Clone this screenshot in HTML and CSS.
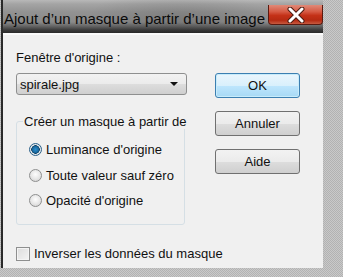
FILE: index.html
```html
<!DOCTYPE html>
<html lang="fr">
<head>
<meta charset="utf-8">
<title>Ajout d'un masque</title>
<link rel="stylesheet" href="styles.css">
</head>
<body>
<div class="window">
  <div class="titlebar">
    <span class="title">Ajout d’un masque à partir d’une image</span>
    <div class="close">
      <svg width="22" height="16" viewBox="0 0 22 16">
        <path d="M5 2 L17 14 M17 2 L5 14" stroke="#4a1a10" stroke-width="5" stroke-linecap="round"/>
        <path d="M5 2 L17 14 M17 2 L5 14" stroke="#ffffff" stroke-width="3" stroke-linecap="round"/>
      </svg>
    </div>
  </div>
  <div class="content">
    <div class="main">
      <div class="left">
        <div class="label">Fenêtre d'origine :</div>
        <div class="select">
          <span>spirale.jpg</span>
          <span class="arrow"></span>
        </div>
        <fieldset class="group">
          <legend>Créer un masque à partir de</legend>
          <div class="radios">
            <div class="radio-row"><span class="radio checked"></span><span>Luminance d'origine</span></div>
            <div class="radio-row"><span class="radio"></span><span>Toute valeur sauf zéro</span></div>
            <div class="radio-row"><span class="radio"></span><span>Opacité d'origine</span></div>
          </div>
        </fieldset>
      </div>
      <div class="right">
        <div class="btn default">OK</div>
        <div class="btn">Annuler</div>
        <div class="btn">Aide</div>
      </div>
    </div>
    <div class="check-row"><span class="checkbox"></span><span>Inverser les données du masque</span></div>
  </div>
</div>
</body>
</html>
```
FILE: styles.css
```css
html, body {
  margin: 0;
  padding: 0;
}
body {
  width: 343px;
  height: 277px;
  overflow: hidden;
  background-color: #bdbdbd;
  background-image: repeating-conic-gradient(#c9c9c9 0 25%, #b2b2b2 0 50%);
  background-size: 2px 2px;
  font-family: "Liberation Sans", Arial, sans-serif;
  font-size: 13px;
  color: #111;
}
.window {
  margin-left: 1px;
  border-left: 2px solid #2a2a2a;
  width: 320px;
  height: 268px;
  display: flex;
  flex-direction: column;
}
.titlebar {
  height: 33px;
  flex: none;
  display: flex;
  align-items: flex-start;
  background:
    radial-gradient(ellipse 90px 30px at 175px 18px, rgba(0,0,0,0.12), rgba(0,0,0,0) 100%),
    linear-gradient(to bottom, #b8b8b8 0, #a4a4a4 4px, #929292 12px, #8a8a8a 22px, #666 26px, #3a3a3a 30px, #2a2a2a 33px);
}
.title {
  padding-top: 9px;
  padding-left: 1px;
  font-size: 15px;
  line-height: 20px;
  color: #0a0a0a;
  white-space: nowrap;
}
.close {
  margin-left: auto;
  margin-top: 5px;
  width: 55px;
  height: 20px;
  box-sizing: border-box;
  border: 1px solid #5a1a10;
  border-top: none;
  border-radius: 0 0 4px 4px;
  background: linear-gradient(to bottom, #e08a78 0, #d65a44 35%, #c43118 55%, #b52a12 80%, #c85a40 100%);
  display: flex;
  align-items: center;
  justify-content: center;
}
.close svg {
  display: block;
}
.content {
  flex: 1;
  background: #f0f0f0;
  border-top: 2px solid #fafafa;
  padding: 15px 0 0 13px;
}
.main {
  display: flex;
}
.left {
  width: 171px;
}
.label {
  line-height: 15px;
}
.select {
  margin-top: 8px;
  height: 22px;
  box-sizing: border-box;
  border: 1px solid #8e8f8f;
  border-radius: 3px;
  background: linear-gradient(to bottom, #f2f2f2 0, #ebebeb 50%, #dddddd 51%, #cfcfcf 100%);
  display: flex;
  align-items: center;
  padding: 0 8px 0 3px;
}
.select .arrow {
  margin-left: auto;
  width: 0;
  height: 0;
  border-left: 4px solid transparent;
  border-right: 4px solid transparent;
  border-top: 4px solid #111;
}
.group {
  margin: 19px 2px 0 0;
  padding: 0;
  min-width: 0;
  height: 111px;
  box-sizing: border-box;
  border: 1px solid #d5dfe5;
  border-radius: 3px;
}
.group legend {
  padding: 0 1px;
  margin-left: 6px;
  line-height: 15px;
  white-space: nowrap;
}
.radios {
  padding: 8px 0 0 12px;
}
.radio-row {
  display: flex;
  align-items: center;
  gap: 4px;
  height: 25.5px;
}
.radio {
  width: 13px;
  height: 13px;
  box-sizing: border-box;
  border-radius: 50%;
  border: 1px solid #8e8f8f;
  background: radial-gradient(circle at 50% 40%, #fdfdfd 0, #e8e8e8 50%, #cdcdcd 100%);
}
.radio.checked {
  border-color: #2c628b;
  background: radial-gradient(circle at 50% 50%, #2a8ecf 0, #1a6aa0 3px, #0d3f63 4px, #e4e8eb 4.5px, #d8dde1 100%);
}
.right {
  margin-left: 28px;
  margin-top: 23px;
  width: 85px;
  display: flex;
  flex-direction: column;
  gap: 13px;
}
.btn {
  height: 25px;
  box-sizing: border-box;
  border: 1px solid #707070;
  border-radius: 3px;
  background: linear-gradient(to bottom, #f2f2f2 0, #ebebeb 50%, #dddddd 51%, #cfcfcf 100%);
  display: flex;
  align-items: center;
  justify-content: center;
}
.btn.default {
  border-color: #3c7fb1;
  background: linear-gradient(to bottom, #eaf6fd 0, #d9f0fc 50%, #bee6fd 51%, #a7d9f5 100%);
  box-shadow: inset 0 0 0 1px #c8ecfb;
}
.check-row {
  margin-top: 21px;
  display: flex;
  align-items: center;
  gap: 4px;
}
.checkbox {
  width: 14px;
  height: 14px;
  box-sizing: border-box;
  border: 1px solid #8e8f8f;
  background: linear-gradient(135deg, #dcdcdc 0, #f4f4f4 100%);
  box-shadow: inset 0 0 0 1px #f4f4f4;
}
```
